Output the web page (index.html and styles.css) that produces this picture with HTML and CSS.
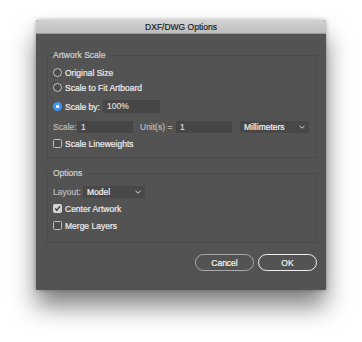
FILE: index.html
```html
<!DOCTYPE html>
<html>
<head>
    <title>DXF/DWG Options</title>
    <meta name="viewport" content="width=device-width,initial-scale=1">
    <link rel="stylesheet" href="styles.css">
</head>
<body>
<div class="dialog">
    <div class="titlebar">DXF/DWG Options</div>
    <div class="content">
        <!-- 아트워크 배율 -->
        <fieldset class="group group-scale">
            <legend>Artwork Scale</legend>
            <div class="row"><span class="radio"></span>Original Size</div>
            <div class="row"><span class="radio"></span>Scale to Fit Artboard</div>
            <div class="row row-scaleby">
                <span class="radio checked"></span>Scale by:
                <span class="field field-pct">100%</span>
            </div>
            <div class="row row-units">
                <span class="dim lbl-scale">Scale:</span>
                <span class="field field-num">1</span>
                <span class="dim lbl-units">Unit(s) =</span>
                <span class="field field-num">1</span>
                <span class="select select-units">Millimeters
                    <svg class="chev" width="6" height="4" viewBox="0 0 6 4"><path d="M0.5 0.8 L3 3.2 L5.5 0.8" fill="none" stroke="#d8d8d8" stroke-width="1"/></svg>
                </span>
            </div>
            <div class="row row-lw"><span class="check"></span>Scale Lineweights</div>
        </fieldset>

        <!-- 옵션 -->
        <fieldset class="group group-opts">
            <legend>Options</legend>
            <div class="row">
                <span class="dim lbl-layout">Layout:</span>
                <span class="select select-layout">Model
                    <svg class="chev" width="6" height="4" viewBox="0 0 6 4"><path d="M0.5 0.8 L3 3.2 L5.5 0.8" fill="none" stroke="#d8d8d8" stroke-width="1"/></svg>
                </span>
            </div>
            <div class="row row-tight">
                <span class="check checked">
                    <svg width="7" height="7" viewBox="0 0 7 7"><path d="M1.2 3.6 L2.9 5.3 L5.9 1.3" fill="none" stroke="#3a3a3a" stroke-width="1.4"/></svg>
                </span>Center Artwork
            </div>
            <div class="row row-tight"><span class="check"></span>Merge Layers</div>
        </fieldset>

        <div class="buttons">
            <button class="btn btn-cancel">Cancel</button>
            <button class="btn btn-ok">OK</button>
        </div>
    </div>
</div>
</body>
</html>
```

FILE: styles.css
```css
/* 전체 화면 */
html, body {
    margin: 0;
    background: #ffffff;
}

body {
    min-height: 100vh;
    box-sizing: border-box;
    padding: 20px 0 0 36px;
    font-family: "Liberation Sans", Arial, sans-serif;
    font-size: 8.5px;
    color: #ececec;
    -webkit-text-stroke: 0.2px;
}

.dialog {
    width: 290px;
    height: 270px;
    box-sizing: border-box;
    background: #535353;
    border-radius: 3px 3px 1px 1px;
    box-shadow: 0 16px 24px rgba(0, 0, 0, 0.5), 0 0 4px rgba(0, 0, 0, 0.3);
    overflow: hidden;
}

.titlebar {
    height: 14px;
    line-height: 14px;
    box-sizing: border-box;
    text-align: center;
    color: #1e1e1e;
    background: linear-gradient(#d2d2d2, #bdbdbd);
    border-bottom: 1px solid #9a9a9a;
}

.content {
    padding: 0 9px 0 11px;
}

/* 그룹 박스 */
.group {
    margin: 15px 0 0 0;
    padding: 4px 0 6px 5px;
    border: 1px solid #4a4a4a;
    min-width: 0;
}

.group legend {
    padding: 0 6px 0 0;
    line-height: 12px;
    color: #d2d2d2;
}

.group-opts {
    margin-top: 9px;
    padding: 5px 0 9px 5px;
}

.row {
    display: flex;
    align-items: center;
    height: 15px;
}

.row-scaleby {
    margin-top: 4px;
}

.row-units {
    margin-top: 5px;
}

.row-lw {
    margin-top: 2px;
}

.row-tight {
    margin-top: 2px;
}

.dim {
    color: #bababa;
}

/* 라디오 / 체크박스 */
.radio {
    width: 9px;
    height: 9px;
    box-sizing: border-box;
    border: 1px solid #c4c4c4;
    border-radius: 50%;
    margin-right: 3px;
    background: #4c4c4c;
}

.radio.checked {
    border: none;
    background: radial-gradient(circle, #ffffff 0 1.6px, #3f94f2 2px);
}

.check {
    width: 9px;
    height: 9px;
    box-sizing: border-box;
    border: 1px solid #bcbcbc;
    border-radius: 1.5px;
    margin-right: 3px;
    background: #4c4c4c;
    display: flex;
    align-items: center;
    justify-content: center;
}

.check.checked {
    background: #d4d4d4;
    border-color: #d4d4d4;
}

/* 입력 필드 */
.field {
    height: 13px;
    line-height: 13px;
    box-sizing: border-box;
    padding-left: 4px;
    background: #464646;
    color: #dcdcdc;
}

.field-pct {
    width: 57px;
    margin-left: 3px;
}

.field-num {
    width: 56px;
    height: 12px;
    line-height: 12px;
}

.lbl-scale {
    width: 24px;
}

.lbl-units {
    width: 36px;
    margin-left: 7px;
}

.select {
    display: flex;
    align-items: center;
    justify-content: space-between;
    height: 12px;
    box-sizing: border-box;
    padding: 0 4px;
    background: #484848;
    color: #f2f2f2;
}

.select-units {
    width: 69px;
    margin-left: 8px;
}

.lbl-layout {
    width: 30px;
}

.select-layout {
    width: 62px;
}

/* 하단 버튼 */
.buttons {
    display: flex;
    justify-content: flex-end;
    gap: 4px;
    margin-top: 11px;
}

.btn {
    width: 59px;
    height: 17px;
    padding: 0;
    border-radius: 9px;
    background: transparent;
    font-family: inherit;
    font-size: 8.5px;
    color: #f4f4f4;
    -webkit-text-stroke: 0.2px;
}

.btn-cancel {
    border: 1.5px solid #a8a8a8;
}

.btn-ok {
    border: 1.5px solid #efefef;
}
```
